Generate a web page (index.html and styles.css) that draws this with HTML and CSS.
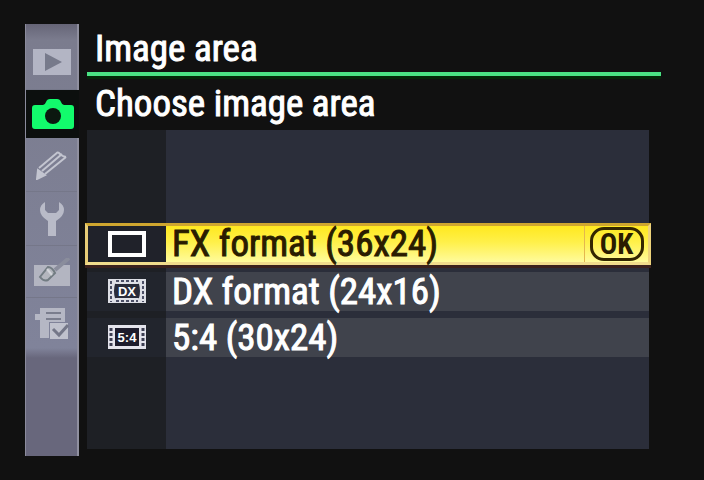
FILE: index.html
```html
<!DOCTYPE html>
<html lang="en">
<head>
  <meta charset="UTF-8">
  <meta name="viewport" content="width=device-width, initial-scale=1.0">
  <title>Image area</title>
  <link rel="stylesheet" href="styles.css">
</head>
<body>
  <div class="screen">
    <nav class="tabs">
      <button class="tab tab-playback" aria-label="Playback">
        <svg width="38" height="26" viewBox="0 0 38 26">
          <rect width="38" height="26" fill="#b3b5c4"/>
          <path d="M12 4v18l17-9z" fill="#777a8b"/>
        </svg>
      </button>
      <button class="tab tab-shooting active" aria-label="Shooting">
        <svg width="42" height="30" viewBox="0 0 42 30">
          <path d="M3 6h8q2 0 3-3 1-3 4-3h7q3 0 4 3 1 3 3 3h7q3 0 3 3v18q0 3-3 3H3q-3 0-3-3V9q0-3 3-3z" fill="#12fb6c"/>
          <circle cx="21" cy="17" r="8" fill="#0b1810"/>
        </svg>
      </button>
      <button class="tab" aria-label="Custom settings">
        <svg width="32" height="30" viewBox="0 0 32 30" fill="none" stroke="#c3c5d0" stroke-width="2">
          <path d="M3 18L22 2M6 21L26 4M9 24L30 7"/>
          <path d="M22 2q3 4 8 5"/>
          <path d="M2 20l7 5-8 4z" fill="#c3c5d0"/>
        </svg>
      </button>
      <button class="tab" aria-label="Setup">
        <svg width="24" height="34" viewBox="0 0 24 34">
          <path d="M5 0v8l3 3h8l3-3V0q5 3 5 8 0 6-8 11v15H8V19Q0 14 0 8 0 3 5 0z" fill="#b9bbc8"/>
        </svg>
      </button>
      <button class="tab tab-low" aria-label="Retouch">
        <svg width="36" height="28" viewBox="0 0 36 28">
          <path d="M0 7h36v21H0z" fill="#b3b5c1"/>
          <path d="M35 0L21 12" stroke="#8a8d9c" stroke-width="4"/>
          <path d="M14 9q4 0 7 6l-7 7q-4 2-8-3z" fill="#b3b6bd" stroke="#727c82" stroke-width="2"/>
          <path d="M13 11l5 6" stroke="#d3d5da" stroke-width="2"/>
        </svg>
      </button>
      <button class="tab tab-low" aria-label="My menu">
        <svg width="34" height="32" viewBox="0 0 34 32">
          <path d="M5 0h25v14H14v16H5V12H0V6h5z" fill="#b5b7c4"/>
          <path d="M11 5h15M11 11h15" stroke="#7a7d8d" stroke-width="2"/>
          <path d="M15 15h18v16H15z" fill="#c0c2cd"/>
          <path d="M18 21l6 6 9-10" fill="none" stroke="#747788" stroke-width="3"/>
        </svg>
      </button>
    </nav>

    <main class="content">
      <h1 class="title">Image area</h1>
      <h2 class="subtitle">Choose image area</h2>
      <div class="panel">
        <button class="option selected">
          <span class="option-icon">
            <svg width="38" height="26" viewBox="0 0 38 26">
              <rect x="2" y="2" width="34" height="22" fill="#20222a" stroke="#fff" stroke-width="4"/>
            </svg>
          </span>
          <span class="option-label">FX format (36x24)</span>
          <span class="option-ok"><span class="ok">OK</span></span>
        </button>
        <button class="option">
          <span class="option-icon">
            <svg width="38" height="24" viewBox="0 0 38 24">
              <rect width="38" height="24" fill="#dedfe6"/>
              <path d="M3 2v21M35 2v21M8 2h22M8 22h22" stroke="#4c4f66" stroke-width="2" stroke-dasharray="3 2"/>
              <path d="M8 5h22v14H8z" fill="#292b3a"/>
              <path d="M8 5q-2 7 0 14M30 5q2 7 0 14" fill="none" stroke="#292b3a" stroke-width="2"/>
              <text class="icon-text" x="19" y="17" text-anchor="middle">DX</text>
            </svg>
          </span>
          <span class="option-label">DX format (24x16)</span>
        </button>
        <button class="option">
          <span class="option-icon">
            <svg width="38" height="24" viewBox="0 0 38 24">
              <rect width="38" height="24" fill="#e4e4ec"/>
              <path d="M3 3v20M35 3v20" stroke="#3c3e52" stroke-width="3" stroke-dasharray="3 2"/>
              <path d="M7 3h24v18H7z" fill="#1d1c2c"/>
              <text class="icon-text" x="19" y="17" text-anchor="middle">5:4</text>
            </svg>
          </span>
          <span class="option-label">5:4 (30x24)</span>
        </button>
      </div>
    </main>
  </div>
</body>
</html>
```

FILE: styles.css
```css
* {
  box-sizing: border-box;
}

body {
  margin: 0;
  background-color: #111;
  color: #fff;
  font-family: "Roboto Condensed", "Liberation Sans Narrow", "Arial Narrow", sans-serif;
}

button {
  margin: 0;
  padding: 0;
  border: none;
  color: inherit;
  font: inherit;
  text-align: left;
  cursor: pointer;
}

.screen {
  display: flex;
  gap: 8px;
  min-height: 100vh;
  padding: 24px 43px 24px 25px;
}

/* Left menu tabs */
.tabs {
  display: flex;
  flex-direction: column;
  flex: none;
  width: 54px;
  background: linear-gradient(#666577, #7b7c8e 16px, #80839a 324px, #68677c 334px);
  border-left: 1px solid #8b8b9c;
  border-right: 2px solid #8f8f9f;
}

.tab {
  display: flex;
  align-items: center;
  justify-content: center;
  height: 54px;
  background-color: transparent;
  border-bottom: 1px solid #757789;
}

.tab-low {
  height: 52px;
}

.tab-low:last-child {
  border: none;
}

.tab-playback {
  height: 66px;
  padding-top: 10px;
}

.tab.active {
  height: 48px;
  margin-right: -2px;
  background-color: #0c0f0e;
  border: none;
}

/* Right side */
.content {
  display: flex;
  flex-direction: column;
  flex: 1;
  min-width: 0;
}

.title,
.subtitle {
  margin: 0;
  padding-left: 8px;
  font-size: 37px;
  font-weight: normal;
  line-height: 48px;
  -webkit-text-stroke: 1px currentColor;
}

.title {
  padding-top: 2px;
  line-height: 46px;
  border-bottom: 4px solid #4ae384;
  box-shadow: 0 3px 0 #032808;
}

.subtitle {
  padding-top: 4px;
  padding-bottom: 2px;
}

.panel {
  display: flex;
  flex-direction: column;
  justify-content: center;
  gap: 7px;
  flex: 1;
  margin: 0 12px 7px 0;
  background: linear-gradient(90deg, #1e2025 79px, #2b2e3a 79px);
}

.option {
  display: flex;
  align-items: stretch;
  height: 39px;
  background: linear-gradient(90deg, #22252d 79px, #40434c 79px);
}

.option.selected {
  height: 42px;
  margin: 0 -2px;
  border: 3px solid;
  border-color: #cfa62f #eed37a #f1dc8c #e8cd78;
  background: linear-gradient(#ffe81f, #fff04a 45%, #fffb9c);
  color: #2a1c00;
  box-shadow: 0 3px 0 #3b211d;
}

.option-icon {
  display: flex;
  align-items: center;
  justify-content: center;
  flex: none;
  width: 79px;
}

.selected .option-icon {
  width: 78px;
  background-color: #20222a;
}

.option-label {
  flex: 1;
  padding-left: 6px;
  font-size: 37px;
  line-height: 39px;
  white-space: nowrap;
  -webkit-text-stroke: 1px currentColor;
}

.selected .option-label {
  line-height: 36px;
}

.option-ok {
  display: flex;
  align-items: center;
  justify-content: center;
  width: 64px;
  border-left: 1px solid #e5b74e;
}

.ok {
  width: 54px;
  height: 34px;
  border: 3px solid #332600;
  border-radius: 14px;
  font-size: 29px;
  font-weight: bold;
  line-height: 28px;
  text-align: center;
}

.icon-text {
  fill: #fff;
  font-family: "Liberation Sans", sans-serif;
  font-size: 13px;
  font-weight: bold;
}
```
